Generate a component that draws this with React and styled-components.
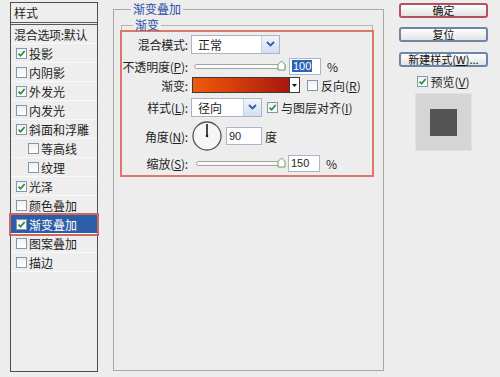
import React from 'react';
import styled, { createGlobalStyle } from 'styled-components';

const GlobalStyle = createGlobalStyle`
  html, body {
    margin: 0;
    padding: 0;
    background: #ededed;
  }
  body {
    font-family: "Noto Sans CJK SC", "Liberation Sans", sans-serif;
    font-size: 12px;
    color: #1f1f1f;
  }
`;

const Dialog = styled.div`
  width: 500px;
  height: 377px;
  box-sizing: border-box;
  display: flex;
  align-items: flex-start;
  padding: 2px 0 0 10px;
  background: #ededed;
  overflow: hidden;
`;

/* ---------- left style list ---------- */

const StyleList = styled.div`
  width: 88px;
  height: 370px;
  box-sizing: border-box;
  flex-shrink: 0;
  border: 1px solid #4e4e4e;
  background: #eeeeee;
  display: flex;
  flex-direction: column;
`;

const ListHeader = styled.div`
  height: 22px;
  box-sizing: border-box;
  padding-left: 3px;
  line-height: 19px;
  border-bottom: 3px double #5a5a5a;
`;

const ListRow = styled.div`
  height: 19px;
  box-sizing: border-box;
  display: flex;
  align-items: center;
  gap: 2px;
  padding-left: ${(p) => p.indent}px;
  border-bottom: 1px solid #f9f9f9;
  white-space: nowrap;
  letter-spacing: ${(p) => (p.tight ? '-0.3px' : '0')};
  background: ${(p) => (p.selected ? '#2c5da8' : 'transparent')};
  color: ${(p) => (p.selected ? '#ffffff' : 'inherit')};
  outline: ${(p) => (p.selected ? '2px solid #d0675c' : 'none')};
  outline-offset: 0;
`;

const Box = styled.span`
  width: 11px;
  height: 11px;
  box-sizing: border-box;
  flex-shrink: 0;
  border: 1px solid #8496aa;
  background: linear-gradient(#eef0f2, #ffffff);
  display: inline-flex;
  align-items: center;
  justify-content: center;
`;

function Check({ checked }) {
  return (
    <Box>
      {checked && (
        <svg width="9" height="9" viewBox="0 0 9 9">
          <path d="M1.5 4.6 L3.6 6.8 L7.6 2" fill="none" stroke="#2c8d34" strokeWidth="1.7" />
        </svg>
      )}
    </Box>
  );
}

/* ---------- main group boxes ---------- */

const GroupBox = styled.fieldset`
  margin: 1px 0 0 15px;
  padding: 0 7px;
  min-width: 0;
  width: 271px;
  height: 368px;
  box-sizing: border-box;
  flex-shrink: 0;
  border: 1px solid #a8a8a8;
`;

const GroupTitle = styled.legend`
  margin-left: ${(p) => p.offset}px;
  padding: 0 2px;
  line-height: 12px;
  color: #2c4fa6;
`;

const InnerGroup = styled.fieldset`
  margin: 4px 0 0 0;
  padding: 0;
  min-width: 0;
  width: 252px;
  box-sizing: border-box;
  border: 1px solid #b5b5b5;
`;

const Highlight = styled.div`
  margin: -1px -2px -2px -2px;
  padding: 0 0 1px 0;
  border: 2px solid #db786c;
  display: flex;
  flex-direction: column;
`;

const Row = styled.div`
  height: ${(p) => p.h}px;
  display: flex;
  align-items: center;
  white-space: nowrap;
`;

const Label = styled.span`
  width: 66px;
  flex-shrink: 0;
  display: flex;
  justify-content: flex-end;
  white-space: nowrap;
  letter-spacing: -0.2px;
`;

const Select = styled.div`
  width: ${(p) => p.w}px;
  height: 19px;
  margin-left: 3px;
  box-sizing: border-box;
  border: 1px solid #a9b5c6;
  background: #ffffff;
  display: flex;
  align-items: center;
  justify-content: space-between;
  padding-left: 6px;
`;

const SelectArrow = styled.span`
  width: 17px;
  height: 17px;
  background: linear-gradient(#f1f5fb, #d2def0);
  border-left: 1px solid #c3d0e2;
  display: flex;
  align-items: center;
  justify-content: center;
`;

function Dropdown({ w, value }) {
  return (
    <Select w={w}>
      <span>{value}</span>
      <SelectArrow>
        <svg width="9" height="6" viewBox="0 0 9 6">
          <path d="M1 1 L4.5 4.5 L8 1" fill="none" stroke="#2d5fb0" strokeWidth="1.8" />
        </svg>
      </SelectArrow>
    </Select>
  );
}

const SliderWrap = styled.div`
  position: relative;
  width: ${(p) => p.w}px;
  height: 12px;
  margin-left: ${(p) => p.ml}px;
  display: flex;
  align-items: center;
`;

const Track = styled.div`
  flex: 1;
  height: 3px;
  border: 1px solid #a3a3a3;
  border-radius: 3px;
  background: #fafafa;
`;

const ThumbMark = styled.svg`
  position: absolute;
  top: 0;
`;

function Slider({ w, ml, pos }) {
  return (
    <SliderWrap w={w} ml={ml}>
      <Track />
      <ThumbMark width="9" height="11" viewBox="0 0 9 11" style={{ left: pos }}>
        <path d="M1 10 L1 4.5 L4.5 1 L8 4.5 L8 10 Z" fill="#ffffff" stroke="#62a162" strokeWidth="1" />
      </ThumbMark>
    </SliderWrap>
  );
}

const NumberField = styled.div`
  width: ${(p) => p.w}px;
  height: ${(p) => p.h}px;
  margin-left: ${(p) => p.ml}px;
  box-sizing: border-box;
  border: 1px solid #a7b6c8;
  background: #ffffff;
  padding-left: 2px;
  display: flex;
  align-items: center;
  font-family: "Liberation Sans", sans-serif;
  font-size: 11px;
`;

const Selected = styled.span`
  background: #2f63b5;
  color: #ffffff;
  padding: 0 1px;
`;

const Unit = styled.span`
  margin-left: ${(p) => p.ml}px;
`;

const GradientBar = styled.div`
  width: 98px;
  height: 16px;
  margin-left: 4px;
  box-sizing: border-box;
  border: 1px solid #3a3a3a;
  background: linear-gradient(90deg, #ec5c0c 0%, #d6400a 40%, #a8180c 100%);
`;

const GradientButton = styled.div`
  width: 10px;
  height: 16px;
  box-sizing: border-box;
  border: 1px solid #3a3a3a;
  border-left: none;
  background: #ffffff;
  display: flex;
  align-items: center;
  justify-content: center;
`;

const CheckItem = styled.span`
  margin-left: ${(p) => p.ml}px;
  display: inline-flex;
  align-items: center;
  gap: ${(p) => p.gap || 3}px;
`;

const Dial = styled.svg`
  margin-left: 4px;
  flex-shrink: 0;
`;

/* ---------- right column ---------- */

const SideColumn = styled.div`
  width: 89px;
  margin-left: 15px;
  padding-top: 1px;
  display: flex;
  flex-direction: column;
  align-items: center;
`;

const Button = styled.div`
  width: 89px;
  height: 15px;
  margin-top: ${(p) => p.mt}px;
  box-sizing: border-box;
  border: 2px solid ${(p) => (p.primary ? '#b7505e' : '#6b86a8')};
  border-radius: 3px;
  background: linear-gradient(#ffffff, #e3e3e3);
  display: flex;
  align-items: center;
  justify-content: center;
  font-size: 11px;
  line-height: 11px;
  white-space: nowrap;
  color: #111;
`;

const PreviewToggle = styled.div`
  margin-top: 7px;
  height: 14px;
  display: flex;
  align-items: center;
  gap: 2px;
`;

const PreviewBox = styled.div`
  width: 57px;
  height: 58px;
  margin-top: 5px;
  box-sizing: border-box;
  border: 1px solid #e2e2e2;
  background: #d5d5d5;
  display: flex;
  align-items: center;
  justify-content: center;
`;

const Swatch = styled.div`
  width: 27px;
  height: 27px;
  background: #555555;
`;

const styleItems = [
  { name: '投影', checked: true },
  { name: '内阴影' },
  { name: '外发光', checked: true },
  { name: '内发光' },
  { name: '斜面和浮雕', checked: true },
  { name: '等高线', sub: true },
  { name: '纹理', sub: true },
  { name: '光泽', checked: true },
  { name: '颜色叠加' },
  { name: '渐变叠加', checked: true, selected: true },
  { name: '图案叠加' },
  { name: '描边' },
];

export default function App() {
  return (
    <>
      <GlobalStyle />
      <Dialog>
        <StyleList>
          <ListHeader>样式</ListHeader>
          <ListRow indent={3} tight>混合选项:默认</ListRow>
          {styleItems.map((item) => (
            <ListRow key={item.name} indent={item.sub ? 17 : 5} selected={item.selected}>
              <Check checked={item.checked} />
              <span>{item.name}</span>
            </ListRow>
          ))}
        </StyleList>

        <GroupBox>
          <GroupTitle offset={10}>渐变叠加</GroupTitle>
          <InnerGroup>
            <GroupTitle offset={11}>渐变</GroupTitle>
            <Highlight>
              <Row h={24}>
                <Label>混合模式:</Label>
                <Dropdown w={89} value="正常" />
              </Row>
              <Row h={20}>
                <Label>不透明度(<u>P</u>):</Label>
                <Slider w={92} ml={6} pos={83} />
                <NumberField w={32} h={17} ml={3}>
                  <Selected>100</Selected>
                </NumberField>
                <Unit ml={6}>%</Unit>
              </Row>
              <Row h={18}>
                <Label>渐变:</Label>
                <GradientBar />
                <GradientButton>
                  <svg width="5" height="3" viewBox="0 0 5 3">
                    <path d="M0 0 L5 0 L2.5 3 Z" fill="#111" />
                  </svg>
                </GradientButton>
                <CheckItem ml={7}>
                  <Check />
                  <span>反向(<u>R</u>)</span>
                </CheckItem>
              </Row>
              <Row h={26}>
                <Label>样式(<u>L</u>):</Label>
                <Dropdown w={71} value="径向" />
                <CheckItem ml={5}>
                  <Check checked />
                  <span>与图层对齐(<u>I</u>)</span>
                </CheckItem>
              </Row>
              <Row h={32}>
                <Label>角度(<u>N</u>):</Label>
                <Dial width="30" height="30" viewBox="0 0 30 30">
                  <circle cx="15" cy="15" r="14" fill="#f6f6f6" stroke="#545454" strokeWidth="1.3" />
                  <line x1="15" y1="15" x2="15" y2="3" stroke="#1c1c1c" strokeWidth="1.6" />
                  <circle cx="15" cy="15" r="1.3" fill="#1c1c1c" />
                </Dial>
                <NumberField w={36} h={18} ml={4}>90</NumberField>
                <Unit ml={3}>度</Unit>
              </Row>
              <Row h={22}>
                <Label>缩放(<u>S</u>):</Label>
                <Slider w={89} ml={8} pos={81} />
                <NumberField w={32} h={17} ml={3}>150</NumberField>
                <Unit ml={6}>%</Unit>
              </Row>
            </Highlight>
          </InnerGroup>
        </GroupBox>

        <SideColumn>
          <Button primary mt={0}>确定</Button>
          <Button mt={9}>复位</Button>
          <Button mt={10}>新建样式(<u>W</u>)...</Button>
          <PreviewToggle>
            <Check checked />
            <span>预览(<u>V</u>)</span>
          </PreviewToggle>
          <PreviewBox>
            <Swatch />
          </PreviewBox>
        </SideColumn>
      </Dialog>
    </>
  );
}
